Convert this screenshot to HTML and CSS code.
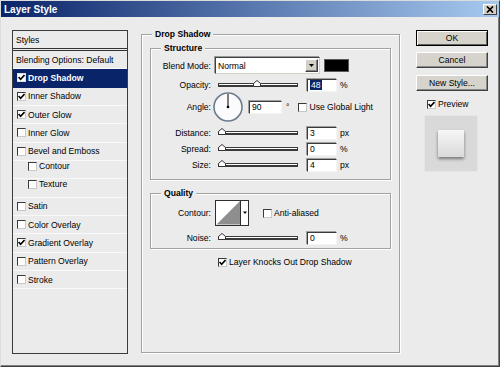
FILE: index.html
```html
<!DOCTYPE html>
<html>
<head>
<meta charset="utf-8">
<title>Layer Style</title>
<link rel="stylesheet" href="styles.css">
</head>
<body>
<div class="dialog">
  <div class="titlebar">
    <span class="title">Layer Style</span>
    <span class="close"><svg width="8" height="7" viewBox="0 0 8 7"><path d="M1 0.5 L7 6.5 M7 0.5 L1 6.5" stroke="#000" stroke-width="1.7" fill="none"/></svg></span>
  </div>
  <div class="body">
    <div class="styles-list">
      <div class="row head">Styles</div>
      <div class="row plain">Blending Options: Default</div>
      <div class="row sel"><span class="cb"><svg width="7" height="7" viewBox="0 0 7 7"><path d="M0.6 3 L2.6 5.2 L6.5 1" fill="none" stroke="#000" stroke-width="1.6"/></svg></span>Drop Shadow</div>
      <div class="row"><span class="cb"><svg width="7" height="7" viewBox="0 0 7 7"><path d="M0.6 3 L2.6 5.2 L6.5 1" fill="none" stroke="#000" stroke-width="1.6"/></svg></span>Inner Shadow</div>
      <div class="row"><span class="cb"><svg width="7" height="7" viewBox="0 0 7 7"><path d="M0.6 3 L2.6 5.2 L6.5 1" fill="none" stroke="#000" stroke-width="1.6"/></svg></span>Outer Glow</div>
      <div class="row"><span class="cb"></span>Inner Glow</div>
      <div class="row"><span class="cb"></span>Bevel and Emboss</div>
      <div class="row sub"><span class="cb"></span>Contour</div>
      <div class="row sub"><span class="cb"></span>Texture</div>
      <div class="row"><span class="cb"></span>Satin</div>
      <div class="row"><span class="cb"></span>Color Overlay</div>
      <div class="row"><span class="cb"><svg width="7" height="7" viewBox="0 0 7 7"><path d="M0.6 3 L2.6 5.2 L6.5 1" fill="none" stroke="#000" stroke-width="1.6"/></svg></span>Gradient Overlay</div>
      <div class="row"><span class="cb"></span>Pattern Overlay</div>
      <div class="row"><span class="cb"></span>Stroke</div>
    </div>

    <fieldset class="group main">
      <legend>Drop Shadow</legend>
      <fieldset class="group sub structure">
        <legend>Structure</legend>
        <div class="frow r-blend">
          <span class="lbl">Blend Mode:</span>
          <div class="select"><span class="sel-text">Normal</span><span class="sel-btn"><svg width="5" height="3" viewBox="0 0 5 3"><polygon points="0,0 5,0 2.5,3" fill="#000"/></svg></span></div>
          <span class="swatch"></span>
        </div>
        <div class="frow r-opacity">
          <span class="lbl">Opacity:</span>
          <div class="slider"><svg class="thumb" style="left:34px" width="8" height="7" viewBox="0 0 8 7"><polygon points="0.5,6.5 0.5,3.5 4,0.5 7.5,3.5 7.5,6.5" fill="#fff" stroke="#333"/></svg></div>
          <span class="num"><span class="hl">48</span></span>
          <span class="unit">%</span>
        </div>
        <div class="frow r-angle">
          <span class="lbl">Angle:</span>
          <svg class="dial" width="30" height="30" viewBox="0 0 30 30"><circle cx="15" cy="15" r="14" fill="#fbfbfd" stroke="#6d7b8c" stroke-width="1.6"/><line x1="15" y1="15" x2="15" y2="2" stroke="#000" stroke-width="1"/><circle cx="15" cy="15" r="1.3" fill="#000"/></svg>
          <span class="num wide">90</span>
          <span class="deg">°</span>
          <span class="cb gl"></span>
          <span>Use Global Light</span>
        </div>
        <div class="frow r-distance">
          <span class="lbl">Distance:</span>
          <div class="slider"><svg class="thumb" width="8" height="7" viewBox="0 0 8 7"><polygon points="0.5,6.5 0.5,3.5 4,0.5 7.5,3.5 7.5,6.5" fill="#fff" stroke="#333"/></svg></div>
          <span class="num">3</span>
          <span class="unit">px</span>
        </div>
        <div class="frow r-small">
          <span class="lbl">Spread:</span>
          <div class="slider"><svg class="thumb" width="8" height="7" viewBox="0 0 8 7"><polygon points="0.5,6.5 0.5,3.5 4,0.5 7.5,3.5 7.5,6.5" fill="#fff" stroke="#333"/></svg></div>
          <span class="num">0</span>
          <span class="unit">%</span>
        </div>
        <div class="frow r-small">
          <span class="lbl">Size:</span>
          <div class="slider"><svg class="thumb" width="8" height="7" viewBox="0 0 8 7"><polygon points="0.5,6.5 0.5,3.5 4,0.5 7.5,3.5 7.5,6.5" fill="#fff" stroke="#333"/></svg></div>
          <span class="num">4</span>
          <span class="unit">px</span>
        </div>
      </fieldset>

      <fieldset class="group sub quality">
        <legend>Quality</legend>
        <div class="frow r-contour">
          <span class="lbl">Contour:</span>
          <svg class="contour" width="34" height="26" viewBox="0 0 34 26"><rect x="0.5" y="0.5" width="33" height="25" fill="#fff" stroke="#2e2e2e"/><polygon points="1.5,24.5 25,1 25,24.5" fill="#8e8e8e"/><line x1="25.5" y1="0.5" x2="25.5" y2="25.5" stroke="#2e2e2e"/><polygon points="28,11.5 32,11.5 30,14" fill="#000"/></svg>
          <span class="cb aa"></span>
          <span>Anti-aliased</span>
        </div>
        <div class="frow r-noise">
          <span class="lbl">Noise:</span>
          <div class="slider"><svg class="thumb" width="8" height="7" viewBox="0 0 8 7"><polygon points="0.5,6.5 0.5,3.5 4,0.5 7.5,3.5 7.5,6.5" fill="#fff" stroke="#333"/></svg></div>
          <span class="num">0</span>
          <span class="unit">%</span>
        </div>
      </fieldset>

      <div class="frow knock">
        <span class="cb"><svg width="7" height="7" viewBox="0 0 7 7"><path d="M0.6 3 L2.6 5.2 L6.5 1" fill="none" stroke="#000" stroke-width="1.6"/></svg></span>
        <span>Layer Knocks Out Drop Shadow</span>
      </div>
    </fieldset>

    <div class="side">
      <button class="btn default">OK</button>
      <button class="btn cancel">Cancel</button>
      <button class="btn newstyle">New Style...</button>
      <div class="frow preview-row">
        <span class="cb"><svg width="7" height="7" viewBox="0 0 7 7"><path d="M0.6 3 L2.6 5.2 L6.5 1" fill="none" stroke="#000" stroke-width="1.6"/></svg></span>
        <span>Preview</span>
      </div>
      <div class="preview"><div class="swatch-preview"></div></div>
    </div>
  </div>
</div>
</body>
</html>
```

FILE: styles.css
```css
* { box-sizing: border-box; }

body {
  margin: 0;
  font-family: "Liberation Sans", Arial, sans-serif;
  font-size: 8.6px;
  color: #000;
  background: #ebebeb;
}

.dialog {
  width: 500px;
  height: 367px;
  background: #ebebeb;
  border: 1px solid;
  border-color: #dcdcdc #404040 #404040 #dcdcdc;
  box-shadow: inset -1px -1px #808080;
  display: flex;
  flex-direction: column;
}

.titlebar {
  height: 16px;
  flex: none;
  display: flex;
  align-items: center;
  justify-content: space-between;
  padding: 0 2px 0 3px;
  background: linear-gradient(to right, #0a246a, #a6caf0);
}

.title {
  color: #fff;
  font-weight: bold;
  font-size: 10px;
}

.close {
  width: 14px;
  height: 11px;
  background: #d4d0c8;
  border: 1px solid;
  border-color: #fff #404040 #404040 #fff;
  display: flex;
  align-items: center;
  justify-content: center;
}

.body {
  display: flex;
  align-items: flex-start;
  padding: 12px 0 0 11px;
}

/* left list */
.styles-list {
  flex: none;
  width: 116px;
  height: 324px;
  margin-top: 1px;
  border: 1px solid #3c3c3c;
}

.row {
  height: 18.33px;
  display: flex;
  align-items: center;
  white-space: nowrap;
  padding-left: 4px;
  border-bottom: 1px solid #f9f9f9;
}

.row.head {
  height: 20px;
  padding-left: 3px;
  border-bottom: 3px double #333;
}

.row.plain { padding-left: 3px; }
.row.sub { padding-left: 15px; }

.row.sel {
  background: #0a246a;
  color: #fff;
  font-weight: bold;
  border-bottom-color: #0a246a;
}

.cb {
  flex: none;
  width: 9px;
  height: 9px;
  margin-right: 2px;
  background: #fff;
  border: 1px solid;
  border-color: #3a3a3a #c8c8c8 #c8c8c8 #3a3a3a;
  display: flex;
  align-items: center;
  justify-content: center;
}

.row.sel .cb { border-color: #e0e0e0; }

/* groups */
.group {
  margin: 0;
  min-width: 0;
  border: 1px solid #a2a2a2;
  box-shadow: inset 1px 1px #fff, 1px 1px #fff;
}

.group legend {
  padding: 0 3px;
  margin-left: 2px;
  font-weight: bold;
  line-height: 11px;
  background: #ebebeb;
}

.main {
  flex: none;
  width: 259px;
  height: 324px;
  margin-left: 13px;
  padding: 3px 8px 0;
}

.sub { padding: 0 0 7px 8px; }
.quality { margin-top: 8px; padding-bottom: 3px; }

.frow {
  display: flex;
  align-items: center;
  white-space: nowrap;
}

.lbl {
  flex: none;
  width: 52px;
  margin-right: 4px;
  text-align: right;
}

.r-blend { margin-top: 3px; height: 17px; }
.r-opacity { margin-top: 4px; height: 14px; }
.r-angle { height: 30px; }
.r-distance { margin-top: 4px; height: 14px; }
.r-small { margin-top: 2px; height: 14px; }
.r-contour { margin-top: 1px; height: 26px; }
.r-noise { margin-top: 5px; height: 14px; }

.select {
  flex: none;
  width: 105px;
  height: 17px;
  background: #fff;
  border: 1px solid;
  border-color: #404040 #d4d0c8 #d4d0c8 #404040;
  box-shadow: -1px -1px #9a9a9a;
  display: flex;
  align-items: center;
  justify-content: space-between;
  padding: 0 1px 0 2px;
}

.sel-btn {
  width: 13px;
  height: 13px;
  background: #d4d0c8;
  border: 1px solid;
  border-color: #fff #404040 #404040 #fff;
  box-shadow: inset -1px -1px #808080;
  display: flex;
  align-items: center;
  justify-content: center;
}

.swatch {
  flex: none;
  width: 25px;
  height: 13px;
  margin-left: 4px;
  background: #000;
  border: 1px solid #5a5a5a;
}

.slider {
  position: relative;
  flex: none;
  width: 80px;
  height: 4px;
  margin-left: 3px;
  background: #fff;
  border: 1px solid #3a3a3a;
  border-bottom-width: 2px;
}

.thumb {
  position: absolute;
  left: -1px;
  bottom: -2px;
}

.num {
  flex: none;
  width: 30px;
  height: 13px;
  margin-left: 9px;
  padding-left: 2px;
  line-height: 11px;
  background: #fff;
  border: 1px solid;
  border-color: #3a3a3a #f4f4f4 #f4f4f4 #3a3a3a;
  box-shadow: -1px -1px #a0a0a0;
}

.hl {
  background: #0a246a;
  color: #fff;
  padding: 0 1px;
}

.num.wide { width: 33px; margin-left: 6px; }
.unit { margin-left: 3px; }
.deg { margin-left: 4px; }

.dial { flex: none; margin-left: -2px; }
.cb.gl { margin-left: 9px; }
.contour { flex: none; }
.cb.aa { margin-left: 14px; }

.knock {
  margin-top: 8px;
  height: 10px;
  padding-left: 68px;
}

/* right column */
.side {
  flex: none;
  width: 72px;
  margin-left: 16px;
  margin-top: 1px;
  display: flex;
  flex-direction: column;
}

.btn {
  display: block;
  width: 72px;
  height: 16px;
  padding: 0;
  margin: 0;
  font: inherit;
  color: #000;
  background: #d6d3cd;
  border: 1px solid;
  border-color: #fff #404040 #404040 #fff;
  box-shadow: inset -1px -1px #8a8a8a;
  text-align: center;
  line-height: 14px;
}

.btn.default {
  border-color: #000;
  box-shadow: inset 1px 1px #fff, inset -1px -1px #606060;
}

.btn.cancel { margin-top: 6px; }
.btn.newstyle { margin-top: 7px; }

.preview-row {
  margin-top: 8px;
  height: 10px;
  padding-left: 11px;
}

.preview {
  width: 54px;
  height: 57px;
  margin-top: 6px;
  margin-left: 8px;
  background: #d9d9d9;
  border: 1px solid #e6e6e6;
  display: flex;
  align-items: center;
  justify-content: center;
}

.swatch-preview {
  width: 26px;
  height: 27px;
  background: linear-gradient(to bottom, #f6f6f6, #dadada);
  box-shadow: 0 2px 3px rgba(0, 0, 0, 0.45);
}
```
